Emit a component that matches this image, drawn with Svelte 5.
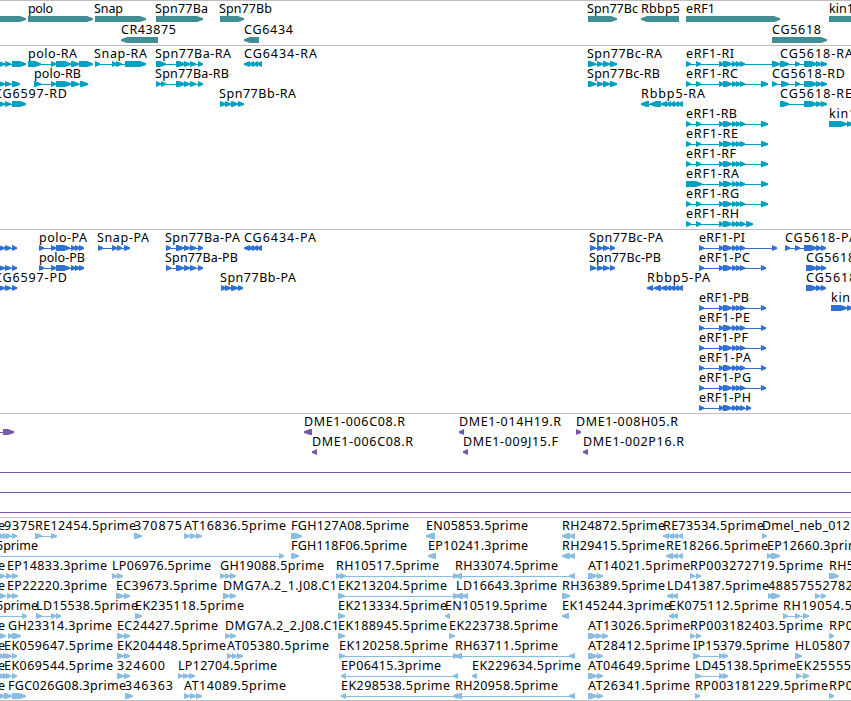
<script lang="ts">
	// label, label start, label end, exons ("<" in front means reverse strand)
	type Feature = [string, number, number, string];
	type Track = { id: string; height: number; pitch: number; rows: Feature[][] };

	const mid = '719-724 723-732 732-737 736-741 740-745';
	const rf = `686-691 696-701 ${mid} 761-768`;
	const pf = `699-704 ${mid} 761-766`;

	const tracks: Track[] = [
		{
			id: 'gene', height: 45, pitch: 21,
			rows: [
				[
					['', 0, 0, '-10-26'],
					['polo', 28, 53, '28-93'],
					['Snap', 94, 123, '95-146'],
					['Spn77Ba', 155, 208, '156-203'],
					['Spn77Bb', 219, 272, '220-244'],
					['Spn77Bc', 587, 638, '588-617'],
					['Rbbp5', 641, 680, '<641-679'],
					['eRF1', 686, 715, '686-780'],
					['kin17', 829, 861, '829-870']
				],
				[
					['CR43875', 121, 176, '<121-158'],
					['CG6434', 244, 293, '<244-259'],
					['CG5618', 772, 821, '772-827']
				]
			]
		},
		{
			id: 'mrna', height: 184, pitch: 20,
			rows: [
				[
					['', 0, 0, '-1-5 5-11 12-26'],
					['polo-RA', 28, 77, '28-41 51-56 56-71 71-79 79-93'],
					['Snap-RA', 94, 147, '95-100 112-117 116-122 125-146'],
					['Spn77Ba-RA', 155, 231, '156-166 176-185 184-190 190-196 198-203'],
					['CG6434-RA', 244, 317, '<244-250 249-254 253-258 257-262'],
					['Spn77Bc-RA', 587, 662, '588-596 597-603 603-610 610-617'],
					['eRF1-RI', 686, 734, `686-691 696-701 ${mid} 772-780`],
					['CG5618-RA', 780, 853, '780-789 795-800 804-817 816-822 821-827']
				],
				[
					['', 0, 0, '-1-5 5-11 12-20'],
					['polo-RB', 34, 81, '34-41 51-56 56-71 71-79 80-88'],
					['Spn77Ba-RB', 155, 229, '156-161 161-166 176-185 184-190 190-196 198-203'],
					['Spn77Bc-RB', 587, 660, '588-596 597-603 603-610 610-617'],
					['eRF1-RC', 686, 738, rf],
					['CG5618-RD', 772, 845, '772-777 781-789 795-800 804-817 816-822 821-827']
				],
				[
					['CG6597-RD', -6, 67, '-1-5 5-11 12-26'],
					['Spn77Bb-RA', 219, 296, '220-226 225-231 231-238 238-244'],
					['Rbbp5-RA', 641, 705, '<641-649 650-661 661-667 666-671 670-675 674-679 678-683'],
					['CG5618-RE', 780, 852, '780-789 804-817 816-822 821-827']
				],
				[
					['eRF1-RB', 686, 737, rf],
					['kin17-RA', 829, 886, '829-847 847-853']
				],
				[['eRF1-RE', 686, 738, rf]],
				[['eRF1-RF', 686, 736, rf]],
				[['eRF1-RA', 686, 739, `686-702 ${mid} 761-768`]],
				[['eRF1-RG', 686, 739, rf]],
				[['eRF1-RH', 686, 739, `686-691 696-701 ${mid} 746-753`]]
			]
		},
		{
			id: 'protein', height: 184, pitch: 20,
			rows: [
				[
					['', 0, 0, '-1-5 5-11 12-17'],
					['polo-PA', 39, 87, '39-44 51-56 56-70 71-76 75-80 79-84'],
					['Snap-PA', 97, 149, '98-103 112-117 117-122 124-130'],
					['Spn77Ba-PA', 165, 240, '166-171 176-184 184-190 190-196 198-203'],
					['CG6434-PA', 244, 316, '<244-250 249-254 253-258 257-262'],
					['Spn77Bc-PA', 589, 663, '590-596 597-603 603-609 610-615'],
					['eRF1-PI', 699, 745, `699-704 ${mid} 772-777`],
					['CG5618-PA', 785, 857, '785-790 795-800 804-817 816-822 821-826']
				],
				[
					['', 0, 0, '-1-5 5-11 12-17'],
					['polo-PB', 39, 85, '39-44 51-56 56-70 71-76 75-80 79-84'],
					['Spn77Ba-PB', 165, 238, '166-171 176-184 184-190 190-196 198-203'],
					['Spn77Bc-PB', 589, 661, '590-596 597-603 603-609 610-615'],
					['eRF1-PC', 699, 750, pf],
					['CG5618-PD', 806, 878, '806-817 816-822 821-826']
				],
				[
					['CG6597-PD', -6, 67, '-1-5 5-11 12-17'],
					['Spn77Bb-PA', 220, 296, '221-226 225-231 231-238 238-243'],
					['Rbbp5-PA', 647, 710, '<647-653 654-661 661-667 666-671 670-675 674-679 678-683'],
					['CG5618-PE', 806, 878, '806-817 816-822 821-826']
				],
				[
					['eRF1-PB', 699, 749, pf],
					['kin17-PA', 831, 887, '831-847 847-853']
				],
				[['eRF1-PE', 699, 750, pf]],
				[['eRF1-PF', 699, 748, pf]],
				[['eRF1-PA', 699, 751, pf]],
				[['eRF1-PG', 699, 751, pf]],
				[['eRF1-PH', 699, 751, `699-704 ${mid} 746-751`]]
			]
		},
		{
			id: 'bac', height: 104, pitch: 20,
			rows: [
				[
					['', 0, 0, '-20--10 3-14'],
					['DME1-006C08.R', 304, 405, '<304-312'],
					['DME1-014H19.R', 459, 561, '<459-464'],
					['DME1-008H05.R', 576, 678, '576-581']
				],
				[
					['DME1-006C08.R', 312, 413, '<312-317'],
					['DME1-009J15.F', 463, 558, '<463-468'],
					['DME1-002P16.R', 583, 684, '<583-588']
				],
				[['', 0, 0, '-20--10 870-880']],
				[['', 0, 0, '-20--10 870-880']],
				[['', 0, 0, '-20--10 870-880']]
			]
		},
		{
			id: 'est', height: 184, pitch: 20,
			rows: [
				[
					['e', -2, 6, '-1-5 3-8 6-11 12-17'],
					['9375', 4, 35, ''],
					['RE12454.5prime', 35, 136, '35-42 51-57'],
					['370875', 134, 182, '134-142'],
					['AT16836.5prime', 184, 286, '184-190 190-196 196-202'],
					['FGH127A08.5prime', 291, 409, '291-302'],
					['EN05853.5prime', 426, 528, '<426-435'],
					['RH24872.5prime', 562, 665, '<562-570 569-575'],
					['RE73534.5prime', 663, 764, '<663-669 668-674 673-678 678-683'],
					['Dmel_neb_012', 762, 850, '762-767']
				],
				[
					['5prime', -4, 38, '-20--10 279-284'],
					['FGH118F06.5prime', 291, 407, '291-299'],
					['EP10241.3prime', 428, 528, '<428-436'],
					['RH29415.5prime', 562, 665, '<562-570 569-575'],
					['RE18266.5prime', 666, 768, '<666-673 672-678 678-683'],
					['EP12660.3prime', 767, 867, '767-772 771-780']
				],
				[
					['e', -2, 6, '-1-5 6-12 12-18'],
					['EP14833.3prime', 7, 107, ''],
					['LP06976.5prime', 112, 211, '112-117 117-123'],
					['GH19088.5prime', 220, 324, '220-225 225-230 230-236'],
					['RH10517.5prime', 336, 439, '336-341 340-346 453-459'],
					['RH33074.5prime', 455, 558, '<455-462 569-575'],
					['AT14021.5prime', 588, 690, '588-597 597-603'],
					['RP003272719.5prime', 690, 823, '690-695 696-701'],
					['RH5', 829, 854, '829-839']
				],
				[
					['e', -2, 6, '-1-6'],
					['EP22220.3prime', 7, 107, '7-12 12-18'],
					['EC39673.5prime', 116, 217, '116-124 124-130'],
					['DMG7A.2_1.J08.C1', 223, 337, '223-230 230-236'],
					['EK213204.5prime', 338, 447, '338-345 453-459'],
					['LD16643.3prime', 456, 557, '<455-463 462-468'],
					['RH36389.5prime', 562, 665, '562-570'],
					['LD41387.5prime', 667, 769, '<667-673 672-678'],
					['48857552782', 768, 853, '768-773 771-780'],
					['', 0, 0, '815-820 821-826']
				],
				[
					['5prime', -4, 38, '-20--10 22-27'],
					['LD15538.5prime', 36, 138, '36-42 51-56 56-61'],
					['EK235118.5prime', 135, 244, '135-142'],
					['EK213334.5prime', 338, 447, '338-345'],
					['EN10519.5prime', 445, 547, '<445-450'],
					['EK145244.3prime', 562, 671, '<562-569'],
					['EK075112.5prime', 669, 778, '<669-674 673-678'],
					['RH19054.5', 783, 852, '783-788 795-800 803-809']
				],
				[
					['e', -2, 6, '-1-6'],
					['GH23314.3prime', 8, 112, '8-13 12-21'],
					['EC24427.5prime', 117, 218, '117-124 124-130'],
					['DMG7A.2_2.J08.C1', 225, 339, '225-230 230-236'],
					['EK188945.5prime', 338, 447, '338-345'],
					['EK223738.5prime', 449, 558, '449-455'],
					['AT13026.5prime', 588, 690, '588-597 596-602 602-608'],
					['RP003182403.5prime', 690, 823, '690-695 696-701'],
					['RP0', 829, 853, '829-834']
				],
				[
					['e', -2, 6, '-1-5 3-8 6-11 12-17'],
					['EK059647.5prime', 4, 113, ''],
					['EK204448.5prime', 117, 226, '117-124 124-130'],
					['AT05380.5prime', 227, 329, '227-232 232-237 237-243'],
					['EK120258.5prime', 339, 448, '339-345 453-459'],
					['RH63711.5prime', 455, 558, '<455-462 569-575'],
					['AT28412.5prime', 588, 690, '588-597 597-603'],
					['IP15379.5prime', 693, 789, '693-700 719-724 723-728'],
					['HL05807', 795, 850, '795-802']
				],
				[
					['e', -2, 6, '-1-5 3-8 6-11 12-17'],
					['EK069544.5prime', 4, 113, ''],
					['324600', 117, 165, '117-124 124-130'],
					['LP12704.5prime', 178, 277, '178-183 183-189 189-195'],
					['EP06415.3prime', 341, 441, '<341-346 453-458'],
					['EK229634.5prime', 472, 581, '<472-477'],
					['AT04649.5prime', 588, 690, '588-597 597-603'],
					['LD45138.5prime', 695, 796, '695-701 719-724 723-728'],
					['EK25555', 796, 851, '796-801 803-809']
				],
				[
					['e', -2, 6, '-1-5 4-12 12-26'],
					['FGC026G08.3prime', 8, 126, ''],
					['346363', 125, 173, '125-133'],
					['AT14089.5prime', 184, 286, '184-190 190-196 196-202'],
					['EK298538.5prime', 341, 450, '<341-346 453-458'],
					['RH20958.5prime', 455, 558, '<455-462 569-575'],
					['AT26341.5prime', 588, 690, '588-597 597-603'],
					['RP003181229.5prime', 695, 828, '695-700'],
					['RP0', 829, 853, '829-834']
				]
			]
		}
	];

	function parse(s: string) {
		return [...s.matchAll(/(-?\d+)-(-?\d+)/g)].map((m) => [+m[1], +m[2]]);
	}

	// block with a slightly blunt head, so short exons still read as arrows
	function arrow(a: number, b: number, reverse: boolean, y: number) {
		const head = Math.min(b - a, 6);
		const [tail, neck, tip] = reverse ? [b, a + head, a] : [a, b - head, b];
		return `${tail},${y - 3} ${neck},${y - 3} ${tip},${y - 0.7} ${tip},${y + 0.9} ${neck},${y + 3} ${tail},${y + 3}`;
	}
</script>

<main>
	{#each tracks as track}
		<section class="track {track.id}">
			<svg width="851" height={track.height - 1}>
				{#each track.rows as row, i}
					{@const y = 18 + i * track.pitch}
					{#each row as [name, start, end, blocks]}
						{@const exons = parse(blocks)}
						{#if exons.length > 1}
							<rect x={exons[0][0]} {y} width={exons[exons.length - 1][1] - exons[0][0] - 1} height="1" />
						{/if}
						{#each exons as [a, b]}
							<polygon points={arrow(a, b, blocks.startsWith('<'), y)} />
						{/each}
						{#if name}
							<text x={start} y={y - 6} textLength={end - start}>{name}</text>
						{/if}
					{/each}
				{/each}
			</svg>
		</section>
	{/each}
</main>

<style>
	:global(body) {
		background: #fff;
	}

	main {
		width: 851px;
		height: 701px;
		overflow: hidden;
		display: flex;
		flex-direction: column;
	}

	.track {
		flex: none;
		border-top: 1px solid #bebebe;
	}

	.track:last-child {
		height: 182px;
		border-bottom: 1px solid #bebebe;
	}

	svg {
		display: block;
		overflow: hidden;
	}

	text {
		font-family: 'Noto Sans', 'DejaVu Sans', sans-serif;
		font-size: 12.5px;
		fill: #000;
	}

	rect {
		shape-rendering: crispEdges;
	}

	.gene { fill: #408e93; }
	.mrna { fill: #00a0c0; }
	.protein { fill: #3070d0; }
	.bac { fill: #7859a8; }
	.est { fill: #8abddf; }
</style>
